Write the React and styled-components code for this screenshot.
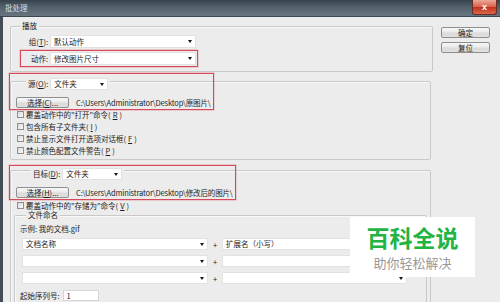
import styled, { createGlobalStyle } from 'styled-components'

const GlobalStyle = createGlobalStyle`
  html, body { margin: 0; padding: 0; background: #ececec; }
  body {
    font-family: "Noto Sans CJK SC", "Noto Sans", sans-serif;
    font-size: 7.5px;
    color: #1c1c1c;
  }
  * { box-sizing: border-box; }
`;

const RED = '#d9485a';

export default function App() {
  return (
    <>
      <GlobalStyle />
      <Window>
        <TitleBar>
          <Title>批处理</Title>
          <CloseButton>x</CloseButton>
        </TitleBar>

        <Body>
          <Main>
            {/* 播放 */}
            <Group $mt={9} $pb={4} $wide>
              <GroupHeader $mt={-6} $ml={9} $h={10}>播放</GroupHeader>
              <Row $mt={2}>
                <RowLabel>组(<u>T</u>):</RowLabel>
                <Select $w={146} $h={13}>默认动作<Caret /></Select>
              </Row>
              <Row $highlight>
                <RowLabel>动作:</RowLabel>
                <Select $w={146} $h={13}>修改图片尺寸<Caret /></Select>
              </Row>
            </Group>

            {/* 源 */}
            <Group $mt={9} $pb={3}>
              <GroupHeader $mt={-4} $ml={15} $h={12}>
                <HeaderLabel>源(<u>O</u>):</HeaderLabel>
                <Select $w={58} $h={12}>文件夹<Caret /></Select>
              </GroupHeader>
              <PathRow>
                <Button $w={53}>选择(<u>C</u>)...</Button>
                <PathText>C:\Users\Administrator\Desktop\原图片\</PathText>
              </PathRow>
              <CheckRow><Box />覆盖动作中的"打开"命令(<u>R</u>)</CheckRow>
              <CheckRow><Box />包含所有子文件夹(<u>I</u>)</CheckRow>
              <CheckRow><Box />禁止显示文件打开选项对话框(<u>F</u>)</CheckRow>
              <CheckRow><Box />禁止颜色配置文件警告(<u>P</u>)</CheckRow>
              <Annotation $top={-9} $left={-2} $w={205} $h={37} />
            </Group>

            {/* 目标 */}
            <Group $mt={10} $pb={40}>
              <GroupHeader $mt={-3} $ml={20} $h={12}>
                <HeaderLabel>目标(<u>D</u>):</HeaderLabel>
                <Select $w={60} $h={12}>文件夹<Caret /></Select>
              </GroupHeader>
              <PathRow>
                <Button $w={53}>选择(<u>H</u>)...</Button>
                <PathText>C:\Users\Administrator\Desktop\修改后的图片\</PathText>
              </PathRow>
              <CheckRow $mt={1}><Box />覆盖动作中的"存储为"命令(<u>V</u>)</CheckRow>

              <Group $mt={4} $pb={30} $mx={3}>
                <GroupHeader $mt={-6} $ml={11} $h={9}>文件命名</GroupHeader>
                <Example>示例: 我的文档.gif</Example>
                <NameRow $mt={3}>
                  <Select $w={186} $h={12}>文档名称<Caret /></Select>
                  <Plus>+</Plus>
                  <Select $w={185} $h={12}>扩展名（小写）<Caret /></Select>
                </NameRow>
                <NameRow $mt={5}>
                  <Select $w={186} $h={12}><span /><Caret /></Select>
                  <Plus>+</Plus>
                  <Select $w={185} $h={12}><span /><Caret /></Select>
                </NameRow>
                <NameRow $mt={5}>
                  <Select $w={186} $h={12}><span /><Caret /></Select>
                  <Plus>+</Plus>
                  <Select $w={185} $h={12}><span /><Caret /></Select>
                </NameRow>
                <StartRow>
                  起始序列号:
                  <NumberInput>1</NumberInput>
                </StartRow>
              </Group>
              <Annotation $top={-6} $left={-2} $w={227} $h={35} />
            </Group>
          </Main>

          <Side>
            <Button $w={49}>确定</Button>
            <Button $w={49}>复位</Button>
          </Side>
        </Body>

        <Watermark>
          <Brand>百科全说</Brand>
          <Slogan>助你轻松解决</Slogan>
        </Watermark>
      </Window>
    </>
  )
}

const Window = styled.div`
  position: relative;
  width: 500px;
  height: 302px;
  overflow: hidden;
  background: #ececec;
  display: flex;
  flex-direction: column;
`;

const TitleBar = styled.div`
  flex: none;
  height: 17px;
  display: flex;
  align-items: flex-start;
  justify-content: space-between;
  background: linear-gradient(180deg, #36414c 0%, #55626e 45%, #687581 100%);
  border-bottom: 1px solid #3b4651;
`;

const Title = styled.div`
  padding: 3px 0 0 5px;
  line-height: 10px;
  color: #d9dde1;
`;

const CloseButton = styled.div`
  width: 25px;
  height: 15px;
  margin-right: 3px;
  display: flex;
  align-items: center;
  justify-content: center;
  border: 1px solid #6b2c22;
  border-top: none;
  border-radius: 0 0 3px 3px;
  background: linear-gradient(180deg, #eaa898 0%, #d8644c 48%, #c2321c 52%, #d8684f 100%);
  color: #fff;
  font-family: "Liberation Sans", sans-serif;
  font-weight: 700;
  font-size: 9px;
`;

const Body = styled.div`
  flex: 1;
  display: flex;
  align-items: flex-start;
  border-left: 3px solid #434b54;
  padding-left: 7px;
`;

const Main = styled.div`
  width: 421px;
  display: flex;
  flex-direction: column;
`;

const Side = styled.div`
  margin-left: 10px;
  margin-top: 10px;
  display: flex;
  flex-direction: column;
  gap: 4px;
`;

const Group = styled.div`
  position: relative;
  display: flex;
  flex-direction: column;
  margin: ${p => p.$mt || 0}px ${p => (p.$wide ? -2 : p.$mx || 0)}px 0 ${p => p.$mx || 0}px;
  padding-bottom: ${p => p.$pb || 0}px;
  border: 1px solid #c9c9c9;
  border-radius: 2px;
  box-shadow: inset 1px 1px 0 #f8f8f8;
`;

const GroupHeader = styled.div`
  align-self: flex-start;
  display: flex;
  align-items: center;
  gap: 2px;
  height: ${p => p.$h}px;
  line-height: ${p => p.$h}px;
  margin-top: ${p => p.$mt}px;
  margin-left: ${p => p.$ml}px;
  padding: 0 2px;
  background: #ececec;
  white-space: nowrap;
`;

const HeaderLabel = styled.span`
  line-height: 12px;
`;

const Row = styled.div`
  align-self: flex-start;
  display: flex;
  align-items: center;
  margin: ${p => p.$mt || 0}px 0 0 9px;
  padding: 1px 1px 1px 0;
  border: 1px solid ${p => (p.$highlight ? RED : 'transparent')};
  box-shadow: ${p => (p.$highlight ? '0 0 0.6px 0.4px rgba(217, 72, 90, 0.45)' : 'none')};
`;

const RowLabel = styled.span`
  width: 27px;
  margin-right: 2px;
  text-align: right;
  white-space: nowrap;
`;

const Select = styled.div`
  flex: none;
  display: flex;
  align-items: center;
  justify-content: space-between;
  width: ${p => p.$w}px;
  height: ${p => p.$h}px;
  padding: 0 3px;
  background: #fff;
  border: 1px solid #e2e2e2;
  line-height: 10px;
  white-space: nowrap;
`;

const Caret = styled.i`
  width: 0;
  height: 0;
  border-left: 2.5px solid transparent;
  border-right: 2.5px solid transparent;
  border-top: 3px solid #151515;
`;

const Button = styled.div`
  flex: none;
  display: flex;
  align-items: center;
  justify-content: center;
  width: ${p => p.$w}px;
  height: 11px;
  border: 1px solid #8f8f8f;
  border-radius: 2px;
  background: linear-gradient(180deg, #f7f7f7 0%, #ebebeb 48%, #dadada 52%, #e0e0e0 100%);
  line-height: 9px;
  white-space: nowrap;
`;

const PathRow = styled.div`
  display: flex;
  align-items: center;
  gap: 7px;
  margin: 7px 0 0 5px;
  white-space: nowrap;
`;

const PathText = styled.span`
  letter-spacing: -0.15px;
`;

const CheckRow = styled.div`
  display: flex;
  align-items: center;
  gap: 2px;
  height: 12px;
  margin: ${p => p.$mt || 0}px 0 0 6px;
  white-space: nowrap;
`;

const Box = styled.span`
  flex: none;
  width: 7px;
  height: 7px;
  border: 1px solid #8e8e8e;
  background: linear-gradient(135deg, #d9d9d9, #fcfcfc);
`;

// red boxes drawn on top of the screenshot
const Annotation = styled.div`
  position: absolute;
  z-index: 2;
  top: ${p => p.$top}px;
  left: ${p => p.$left}px;
  width: ${p => p.$w}px;
  height: ${p => p.$h}px;
  border: 1px solid ${RED};
  box-shadow: 0 0 0.6px 0.4px rgba(217, 72, 90, 0.45);
  pointer-events: none;
`;

const Example = styled.div`
  height: 12px;
  line-height: 12px;
  margin: 4px 0 0 5px;
`;

const NameRow = styled.div`
  display: flex;
  align-items: center;
  margin-top: ${p => p.$mt}px;
  padding-left: 7px;
`;

const Plus = styled.span`
  width: 14px;
  text-align: center;
`;

const StartRow = styled.div`
  display: flex;
  align-items: center;
  gap: 3px;
  margin: 6px 0 0 5px;
  white-space: nowrap;
`;

const NumberInput = styled.div`
  width: 36px;
  height: 11px;
  line-height: 9px;
  padding-left: 3px;
  background: #fff;
  border: 1px solid #d6d6d6;
`;

const Watermark = styled.div`
  position: absolute;
  z-index: 3;
  left: 350px;
  top: 217px;
  width: 125px;
  height: 60px;
  display: flex;
  flex-direction: column;
  align-items: center;
  justify-content: center;
  background: #fff;
`;

const Brand = styled.div`
  font-size: 23px;
  font-weight: 700;
  line-height: 1.45;
  color: #22b443;
`;

const Slogan = styled.div`
  font-size: 13px;
  line-height: 1.45;
  color: #9a9a9a;
`;
